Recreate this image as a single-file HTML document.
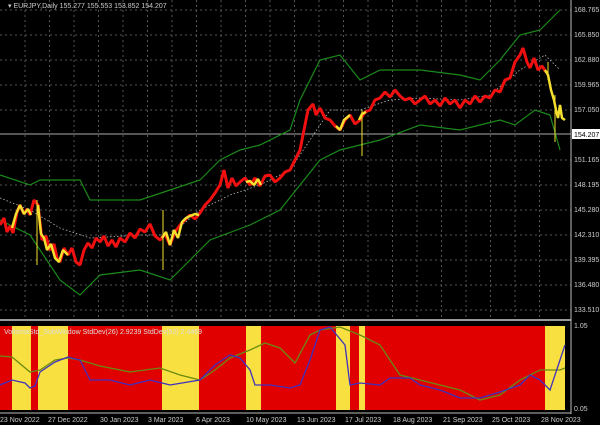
<!DOCTYPE html><html><head><style>body{margin:0;background:#000;width:600px;height:425px;overflow:hidden;font-family:"Liberation Sans",sans-serif}</style></head><body>
<svg width="600" height="425" xmlns="http://www.w3.org/2000/svg" style="display:block">
<rect width="600" height="425" fill="#000"/>
<g stroke="#555" stroke-dasharray="2,3" stroke-width="1">
<line x1="0" y1="10" x2="571" y2="10"/><line x1="0" y1="35" x2="571" y2="35"/><line x1="0" y1="60" x2="571" y2="60"/><line x1="0" y1="85" x2="571" y2="85"/><line x1="0" y1="110" x2="571" y2="110"/><line x1="0" y1="160" x2="571" y2="160"/><line x1="0" y1="185" x2="571" y2="185"/><line x1="0" y1="210" x2="571" y2="210"/><line x1="0" y1="235" x2="571" y2="235"/><line x1="0" y1="260" x2="571" y2="260"/><line x1="0" y1="285" x2="571" y2="285"/><line x1="0" y1="310" x2="571" y2="310"/>
<line x1="25" y1="0" x2="25" y2="318"/><line x1="49.5" y1="0" x2="49.5" y2="318"/><line x1="74" y1="0" x2="74" y2="318"/><line x1="98.5" y1="0" x2="98.5" y2="318"/><line x1="123" y1="0" x2="123" y2="318"/><line x1="147.5" y1="0" x2="147.5" y2="318"/><line x1="172" y1="0" x2="172" y2="318"/><line x1="196.5" y1="0" x2="196.5" y2="318"/><line x1="221" y1="0" x2="221" y2="318"/><line x1="245.5" y1="0" x2="245.5" y2="318"/><line x1="270" y1="0" x2="270" y2="318"/><line x1="294.5" y1="0" x2="294.5" y2="318"/><line x1="319" y1="0" x2="319" y2="318"/><line x1="343.5" y1="0" x2="343.5" y2="318"/><line x1="368" y1="0" x2="368" y2="318"/><line x1="392.5" y1="0" x2="392.5" y2="318"/><line x1="417" y1="0" x2="417" y2="318"/><line x1="441.5" y1="0" x2="441.5" y2="318"/><line x1="466" y1="0" x2="466" y2="318"/><line x1="490.5" y1="0" x2="490.5" y2="318"/><line x1="515" y1="0" x2="515" y2="318"/><line x1="539.5" y1="0" x2="539.5" y2="318"/>
</g>
<line x1="0" y1="134" x2="571" y2="134" stroke="#aaa" stroke-width="1"/>
<g fill="none" stroke="#1a8a1a" stroke-width="1.2">
<polyline points="0,175 30,185 40,180 80,180 90,200 140,200 170,190 200,180 220,160 240,150 260,145 290,130 300,100 320,60 340,55 360,80 380,70 420,70 460,75 480,80 500,60 520,35 540,30 560,10"/>
<polyline points="0,220 30,235 60,280 80,295 100,275 140,270 170,280 190,260 210,240 250,225 280,210 300,185 320,160 340,150 380,140 420,125 460,130 480,125 500,120 515,125 535,110 550,115 560,150"/>
</g>
<polyline fill="none" stroke="#bbb" stroke-dasharray="1.5,2" stroke-width="0.8" points="0,198 30,210 60,228 90,238 140,235 170,235 200,210 230,195 260,185 290,170 310,140 330,110 360,110 390,100 420,98 460,100 490,95 520,70 545,55 560,70"/>
<polyline fill="none" stroke="#f01010" stroke-width="3" stroke-linejoin="bevel" points="0,225 4,218 7,232 10,226 13,233 17,212 20,205 24,214 27,209 30,215 34,200 38,205 42,240 46,236 50,250 54,244 57,258 60,262 64,248 68,255 72,248 76,262 80,265 84,250 88,243 92,248 96,238 100,242 104,236 108,246 112,240 116,247 120,238 125,242 130,233 135,238 140,229 145,232 150,224 155,236 160,240 165,234 170,245 175,232 180,225 185,220 190,215 195,219 200,213 205,205 210,200 215,193 220,185 224,170 228,188 232,178 236,186 240,182 245,178 250,185 255,178 260,186 265,176 270,175 275,182 280,178 285,172 290,170 295,160 300,150 304,130 308,110 313,104 316,115 320,108 325,118 330,120 335,126 340,130 345,120 350,115 355,124 360,120 365,112 370,110 375,100 380,98 385,92 390,97 395,90 400,96 405,100 410,98 415,104 420,100 425,96 430,104 435,100 440,106 445,98 450,104 455,100 460,108 465,100 470,104 475,96 480,102 485,96 490,98 495,90 500,92 505,80 510,78 515,62 520,55 523,48 527,62 530,68 534,58 538,70 542,66 546,72"/>
<g fill="none" stroke="#f5e030" stroke-width="2.5" stroke-linejoin="bevel">
<polyline points="12,228 16,214 20,205 24,214 28,209 31,215"/><polyline points="38,205 41,234 44,238 47,250 51,244 55,258 59,262 63,250 68,255"/><polyline points="162,238 166,232 170,245 174,230 178,238 182,222 186,218 190,216 195,214 199,215"/><polyline points="246,182 250,181 254,185 258,179 261,185"/><polyline points="336,126 340,130 344,120 350,115"/><polyline points="359,120 362,114 366,112"/><polyline points="545,70 548,75 551,90 554,100 556,110 558,118 560,105 562,118 565,120"/>
</g>
<g stroke="#f5e030" stroke-width="1"><line x1="37" y1="200" x2="37" y2="265"/><line x1="163" y1="210" x2="163" y2="270"/><line x1="548" y1="62" x2="548" y2="80"/><line x1="555" y1="95" x2="555" y2="142"/><line x1="362" y1="110" x2="362" y2="156"/></g>
<line x1="0" y1="320" x2="571" y2="320" stroke="#999" stroke-width="2"/>
<rect x="0" y="326" width="565" height="84" fill="#e00000"/>
<g fill="#f8e040"><rect x="12" y="326" width="19" height="84"/><rect x="38" y="326" width="30" height="84"/><rect x="162" y="326" width="37" height="84"/><rect x="246" y="326" width="15" height="84"/><rect x="336" y="326" width="14" height="84"/><rect x="359" y="326" width="6" height="84"/><rect x="545" y="326" width="20" height="84"/></g>
<polyline fill="none" stroke="#6a8a10" stroke-width="1.3" points="0,356 12,357 30,372 40,370 55,360 68,358 80,360 100,366 130,372 160,368 180,375 200,380 215,370 230,358 250,350 265,343 280,348 295,363 310,335 320,330 340,327 360,335 380,345 400,375 420,380 460,390 470,395 480,400 500,395 520,380 540,370 550,370 560,370 565,368"/>
<polyline fill="none" stroke="#4030c0" stroke-width="1.3" points="0,385 12,380 25,383 30,388 35,386 40,372 55,362 68,357 80,360 90,380 110,380 130,385 150,380 170,385 200,380 215,365 230,355 240,358 250,370 255,385 270,385 290,388 300,385 310,360 320,330 330,327 345,345 350,385 360,383 380,385 390,378 410,378 420,385 440,390 460,398 480,398 500,392 520,385 530,375 540,380 550,390 560,360 565,345"/>
<line x1="571" y1="0" x2="571" y2="414" stroke="#bbb" stroke-width="1"/>
<line x1="0" y1="413" x2="571" y2="413" stroke="#bbb" stroke-width="1"/>
<g fill="#ccc" font-size="7" font-family="Liberation Sans,sans-serif">
<text x="8" y="8">▾ EURJPY,Daily  155.277 155.553 153.852 154.207</text>
<text x="4" y="334" fill="#ddd">VoltsmaStd_SubWindow  StdDev(26) 2.9239  StdDev(52) 2.4469</text>
<text x="574" y="12">168.765</text><text x="574" y="37">165.850</text><text x="574" y="62">162.880</text><text x="574" y="87">159.965</text><text x="574" y="112">157.050</text><text x="574" y="162">151.165</text><text x="574" y="187">148.195</text><text x="574" y="212">145.280</text><text x="574" y="237">142.310</text><text x="574" y="262">139.395</text><text x="574" y="287">136.480</text><text x="574" y="312">133.510</text>
<text x="574" y="328">1.05</text><text x="574" y="411">0.05</text>
<text x="0" y="422">23 Nov 2022</text><text x="48" y="422">27 Dec 2022</text><text x="100" y="422">30 Jan 2023</text><text x="148" y="422">3 Mar 2023</text><text x="196" y="422">6 Apr 2023</text><text x="246" y="422">10 May 2023</text><text x="297" y="422">13 Jun 2023</text><text x="345" y="422">17 Jul 2023</text><text x="393" y="422">18 Aug 2023</text><text x="443" y="422">21 Sep 2023</text><text x="492" y="422">25 Oct 2023</text><text x="541" y="422">28 Nov 2023</text>
</g>
<rect x="572" y="129" width="28" height="10" fill="#fff"/>
<text x="574" y="137" font-size="7" fill="#000" font-family="Liberation Sans,sans-serif">154.207</text>
</svg>
</body></html>
